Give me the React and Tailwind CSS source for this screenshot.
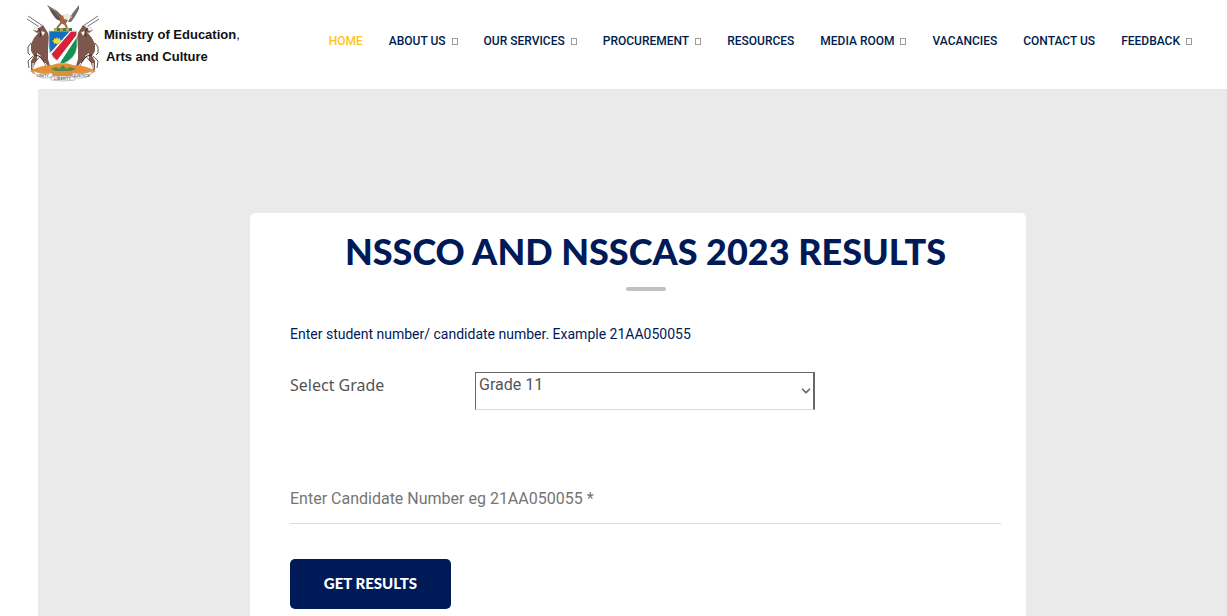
import React, { useState } from "react";
import { ChevronDown } from "lucide-react";

const links = [
  { name: "HOME", active: true },
  { name: "ABOUT US", menu: true },
  { name: "OUR SERVICES", menu: true },
  { name: "PROCUREMENT", menu: true },
  { name: "RESOURCES" },
  { name: "MEDIA ROOM", menu: true },
  { name: "VACANCIES" },
  { name: "CONTACT US" },
  { name: "FEEDBACK", menu: true },
];

const Oryx = () => (
  <g>
    <path d="M18 23 L3 13 M16 25 L2 16" stroke="#77706f" strokeWidth="1" fill="none" />
    <path d="M23 30 L18 22 L11 24 L8 27 L12 30 L14 29 L9 35 L6 41 L6 48 L9 53 L6 58 L6 67 L8 67 L10 60 L15 54 L19 60 L22 66 L26 66 L23 56 L23 46 L24 34 Z" fill="#7d564c" />
    <path d="M18 22 L11 24 L8 27 L12 28 L14 25 Z M15 28 L18 33 L20 29 Z M12 50 L16 53 L12 56 Z" fill="#f5f2ef" />
    <path d="M13 25 L16 29 L15 34 M9 52 L14 53 L19 58" stroke="#3a2c2a" strokeWidth="1" fill="none" />
    <path d="M6 40 L3 44 L3 50 L5 52" stroke="#5d4c48" strokeWidth="1" fill="none" />
    <path d="M8 60 L8 66 M20 60 L24 66" stroke="#f1eeee" strokeWidth="1.2" />
    <path d="M8 53 L3 58 L4 65" stroke="#6b5a56" strokeWidth="1" fill="none" />
  </g>
);

const CoatOfArms = () => (
  <svg viewBox="0 0 76 80" className="h-20 w-[76px] shrink-0" role="img" aria-label="Coat of arms">
    <Oryx />
    <g transform="translate(76 0) scale(-1 1)">
      <Oryx />
    </g>
    <path d="M5 68 Q16 62 27 62 Q38 58 48 62 Q60 62 71 68 L66 71 L9 71 Z" fill="#e69034" />
    <path d="M25 65 Q38 60 52 65 L49 73 L28 73 Z" fill="#d8913e" />
    <path d="M26 66 L31 64 L34 66 L38 62 L41 66 L45 64 L51 66 L45 68 L31 68 Z" fill="#5b8745" />
    <path d="M24 28 H52 V44 Q51 55 38 61 Q25 55 24 44 Z" fill="#fff" />
    <path d="M24 28 H45 L25 50 Q24 47 24 44 Z" fill="#1470bd" />
    <path d="M52 34 V44 Q51 55 38 61 L35 60 Z" fill="#159052" />
    <path d="M46 28 H52 V32 L32 58 Q27 55 26 51 Z" fill="#d5233b" stroke="#fff" strokeWidth="1" />
    <path d="M24 28 H52 V44 Q51 55 38 61 Q25 55 24 44 Z" fill="none" stroke="#d7d8dc" strokeWidth=".7" />
    <path d="M32 34 L33 36 L35 35 L35 37 L37 38 L35 39 L35 41 L33 40 L32 42 L31 40 L29 41 L29 39 L27 38 L29 37 L29 35 L31 36 Z" fill="#f8da3c" />
    {/* fish eagle */}
    <path d="M35 18 L31 16 L28 12 L26 9 L24 5 L22 2 L27 5 L32 8 L37 13 L35 18 Z" fill="#5c5554" />
    <path d="M43 19 L47 11 L50 7 L54 2 L54 6 L52 10 L49 15 L46 19 Z" fill="#6f6f76" />
    <path d="M24 4 L30 8 L35 14" stroke="#a9826a" strokeWidth="1" fill="none" />
    <path d="M35 13 L40 12 L43 17 L40 22 L35 20 Z" fill="#a8623e" />
    <path d="M38 12 Q42 9 45 12 L47 15 L44 14 L43 17 L39 16 Z" fill="#eee8df" />
    <path d="M45 12 L47 13 L46 15 Z" fill="#d9a73b" />
    <path d="M36 20 L32 25 M40 21 L42 25" stroke="#8a6a52" strokeWidth="2" />
    <path d="M29 25 H47 V28 H29 Z" fill="#b9a24b" />
    <path d="M32 25 H35 V28 H32 Z M38 25 H41 V28 H38 Z M44 25 H47 V28 H44 Z" fill="#308058" />
    {/* motto ribbon */}
    <path d="M8 68 Q17 72 27 70 L28 74 Q17 77 11 72 Z M48 70 Q59 72 68 68 L65 72 Q59 77 47 74 Z M26 73 Q38 75 50 73 V77 Q38 79 26 77 Z" fill="#fff" stroke="#aaa39d" strokeWidth=".7" />
    <g fill="#77706b" fontFamily="Liberation Sans, sans-serif" fontSize="4" fontWeight="700">
      <text x="12" y="74">UNITY</text>
      <text x="29" y="77">LIBERTY</text>
      <text x="48" y="74">JUSTICE</text>
    </g>
  </svg>
);

const Header = () => (
  <header className="flex h-[89px] items-start justify-between bg-white pr-[35px] pl-[25px]">
    <a href="#" className="flex items-start pt-[3px] font-['Liberation_Sans',sans-serif] text-[13px] leading-[22px] font-bold text-[#111]">
      <CoatOfArms />
      <span className="flex flex-col pt-[21px] pl-[3px] whitespace-nowrap">
        <span>
          Ministry of Education<span className="font-normal">,</span>
        </span>
        <span className="pl-[2px]">Arts and Culture</span>
      </span>
    </a>
    <nav className="flex gap-[26px] pt-8">
      {links.map((link) => (
        <a
          key={link.name}
          href="#"
          className={`flex items-center gap-[6px] text-xs leading-[18px] font-medium whitespace-nowrap ${
            link.active ? "text-[#ffc226]" : "text-[#001c4c]"
          }`}
        >
          {link.name}
          {link.menu && <span className="h-[7px] w-[6px] border border-[#a09c9c]" />}
        </a>
      ))}
    </nav>
  </header>
);

const ResultsForm = () => {
  const [grade, setGrade] = useState("11");
  const [candidate, setCandidate] = useState("");

  return (
    <form
      onSubmit={(e) => e.preventDefault()}
      className="w-full max-w-[776px] rounded-t-[5px] bg-white pt-[14px] pr-[25px] pb-[7px] pl-10"
    >
      <h1 className="text-center font-['Lato',sans-serif] text-4xl leading-[48px] font-black text-[#001a57]">
        NSSCO AND NSSCAS 2023 RESULTS
      </h1>
      <div className="mx-auto mt-3 h-1 w-10 rounded-full bg-[#c1c1c1]" />

      <p className="mt-[33px] text-sm leading-5 text-[#001a57]">
        Enter student number/ candidate number. Example 21AA050055
      </p>

      <div className="mt-7 flex items-start">
        <label htmlFor="grade" className="w-[185px] font-['Noto_Sans',sans-serif] text-base leading-[26px] text-[#555]">
          Select Grade
        </label>
        <div className="relative w-[340px]">
          <select
            id="grade"
            value={grade}
            onChange={(e) => setGrade(e.target.value)}
            className="block h-[38px] w-full appearance-none border border-r-2 border-[#696969] border-b-[#dcdcdc] bg-white pb-3 pl-[3px] text-base text-[#555] outline-none"
          >
            <option value="11">Grade 11</option>
            <option value="12">Grade 12</option>
          </select>
          <ChevronDown className="pointer-events-none absolute top-3 right-[2px] size-[14px] text-[#666]" strokeWidth={3} />
        </div>
      </div>

      <input
        type="text"
        aria-label="Candidate number"
        placeholder="Enter Candidate Number eg 21AA050055 *"
        value={candidate}
        onChange={(e) => setCandidate(e.target.value)}
        className="mt-16 block h-[50px] w-full border-b border-[#dcdcdc] text-base text-[#555] outline-none placeholder:text-[#757575]"
      />

      <button
        type="submit"
        className="mt-[35px] block h-[50px] w-[161px] rounded-[5px] bg-[#001a57] pb-[2px] font-['Lato',sans-serif] text-[15px] font-black text-white"
      >
        GET RESULTS
      </button>
    </form>
  );
};

const App = () => {
  return (
    <div className="flex min-h-screen flex-col bg-white font-['Roboto',sans-serif]">
      <Header />
      <main className="ml-[38px] flex flex-1 justify-center bg-[#eaeaea] pt-[124px] pl-[11px]">
        <ResultsForm />
      </main>
    </div>
  );
};

export default App;
